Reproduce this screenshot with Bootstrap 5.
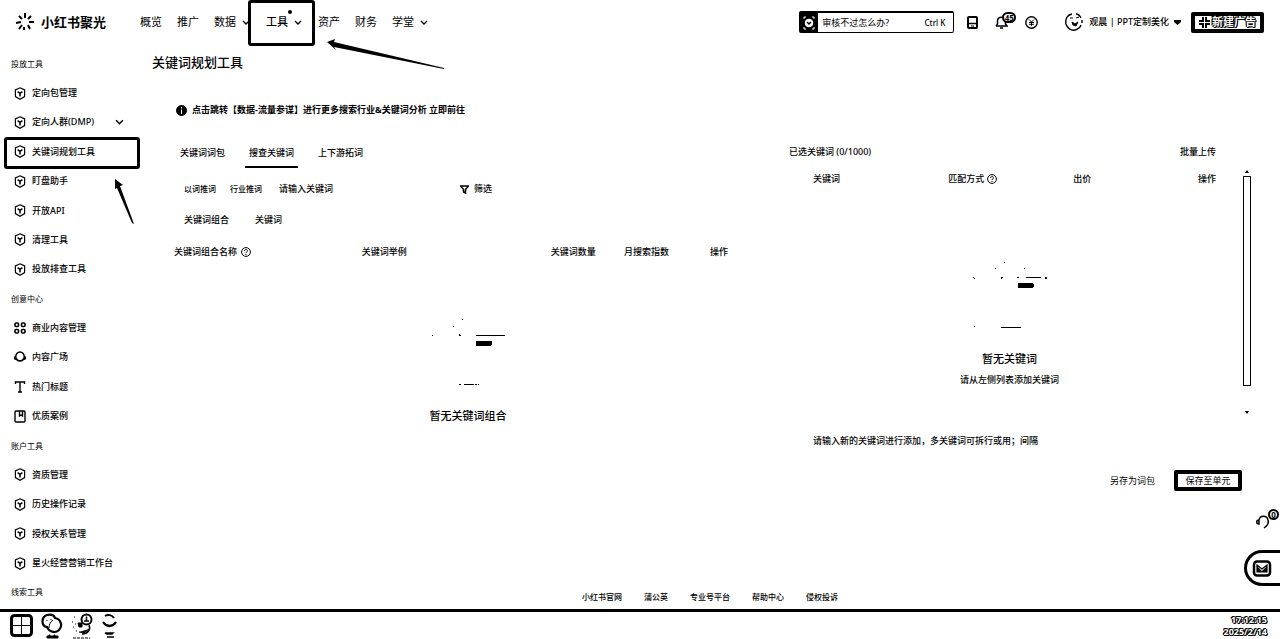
<!DOCTYPE html>
<html lang="zh-CN">
<head>
<meta charset="utf-8">
<meta name="viewport" content="width=device-width, initial-scale=1">
<title>小红书聚光 - 关键词规划工具</title>
<link rel="stylesheet" href="https://cdn.jsdelivr.net/npm/bootstrap@5.3.0/dist/css/bootstrap.min.css">
<style>
body{font-family:"Noto Sans","Noto Sans CJK SC",sans-serif;font-size:9px;line-height:14px;color:#000;background:#fff;font-weight:500}
a{color:#000;text-decoration:none}
button,input,textarea{color:#000;font:inherit}
button{background:none;border:0;padding:0}
svg{display:block;flex:none;fill:none;stroke:#000}
.defs{position:absolute;width:0;height:0}
.fs-s{font-size:8px}
.fs-m{font-size:11px}
.fs-l{font-size:13px}
.topbar{height:44px;padding:0 16px 0 15px}
.brand-name{font-weight:700;margin-left:6px}
.main-nav{gap:15px;margin-left:34px;font-weight:400}
.main-nav .chev{margin-left:5px;width:10px}
.callout{position:absolute;border:3px solid #000;border-radius:3px;pointer-events:none}
.callout-nav{left:-18px;top:-15px;width:67px;height:46px}
.callout-side{inset:0 0 -2px 4px}
.dot{position:absolute;left:22px;top:-5px;width:4px;height:4px;border-radius:50%;background:#000}
.arrow-a{position:absolute;left:326px;top:38px;pointer-events:none}
.arrow-b{position:absolute;left:112px;top:178px;pointer-events:none}
.search{width:155px;height:22px;border:1px solid #000;border-top-width:2px;border-radius:2px}
.search .tile{width:18px;flex:none;background:#000}
.search input{border:0;outline:0;min-width:0;padding:0 0 0 4px;background:none;font-weight:400}
::placeholder{color:#000!important;opacity:1!important}
.num{position:absolute;border:2px solid #000;border-radius:6px;background:#fff;font-size:8px;line-height:7px;font-weight:700;text-align:center}
.outlined{color:#fff;font-weight:700;text-shadow:1px 0 #000,-1px 0 #000,0 1px #000,0 -1px #000,1px 1px #000,-1px -1px #000}
.heavy{border:4px solid #000;border-radius:2px;height:21px}
.side{width:140px;padding:5px 0 2px}
.side>*{flex:1 0 24px;display:flex;align-items:center;position:relative}
.side a{padding-left:14px}
.side a svg{margin-right:6px}
.side .sec{padding-left:11px;font-size:8px;font-weight:400}
.content-area{padding-left:12px;min-width:0}
.cols{display:grid;grid-template-columns:632fr 484fr;margin:14px 12px 0 0}
.title{height:36px;margin:0;font-weight:500;line-height:36px}
.note{height:28px;margin-top:16px;padding-left:24px;gap:5px}
.tabs{gap:16px;margin-left:24px;height:30px}
.tabs a{padding:8px 4px 0;border-bottom:2px solid transparent}
.tabs .on{border-color:#000}
.seek{height:22px;margin-top:10px;padding-left:32px}
.seek input{border:0;outline:0;background:none;padding:0;width:165px}
.sub{height:22px;margin-top:9px;padding-left:32px;gap:26px}
.plain{width:100%;table-layout:fixed}
.plain th{font-weight:500;height:20px;padding:0;white-space:nowrap}
.left-table{margin-top:11px}
.blank{text-align:center}
.blank svg{margin:0 auto;fill:#000;stroke:none}
.blank-left{padding-top:56px}
.blank-right{padding:73px 8px 0 0}
.right-head{height:28px;padding:0 52px 0 5px}
.rail{width:8px;margin:3px 17px 0 0}
.rail .track{flex:1;border:1px solid #000;margin:3px 0 25px}
.panel{height:249px}
.words{border:0;outline:0;resize:none;background:none;height:34px;padding:10px 0;margin:9px 0 0 29px;width:400px;overflow:hidden}
.acts{gap:19px;padding-right:26px;margin-top:12px;font-weight:400}
.foot{height:24px;gap:22px;font-size:8px}
.float-tools{position:absolute;right:0;top:508px;width:36px}
.mail{width:36px;height:36px;border:3px solid #000;border-right:0;border-radius:18px 0 0 18px;padding-left:5px;margin-top:21px}
.taskbar{height:30px;border-top:3px solid #000;padding:0 13px 0 10px}
.clock{line-height:12px;font-size:9px;text-align:right}
</style>
</head>
<body class="d-flex flex-column min-vh-100 position-relative">
<svg class="defs" aria-hidden="true">
  <symbol id="hex" viewBox="0 0 12 13"><path d="M6 .8 10.600 3v6.600L6 12.200 1.400 9.600V3Z" stroke-width="1.200"/><path d="M3.600 4.600 6 6.300l2.400-1.700M6 6.300v3.200" stroke-width="1.500"/></symbol>
  <symbol id="down" viewBox="0 0 8 5"><path d="m1 1 3 3 3-3" stroke-width="1.400"/></symbol>
  <symbol id="ask" viewBox="0 0 10 10"><circle cx="5" cy="5" r="4.400"/><path d="M3.500 4c0-2 3-2 3-.2C6.500 5 5 4.800 5 6.200M5 7v1"/></symbol>
</svg>

<header class="topbar d-flex align-items-center">
  <a href="#" class="d-flex align-items-center">
    <svg width="20" height="18" viewBox="0 0 20 18" stroke-width="2"><path d="M10 0v5M4 3l3 3M16 3l-3 3M1 10l5-1M14 9h5M4 16l3-4M9 17v-3M15 16l-2-4"/></svg>
    <span class="brand-name fs-l">小红书聚光</span>
  </a>
  <nav class="main-nav d-flex align-items-center fs-m">
    <a href="#">概览</a><a href="#">推广</a>
    <a href="#" class="d-flex align-items-center">数据<svg class="chev" width="8" height="5"><use href="#down"/></svg></a>
    <a href="#" class="d-flex align-items-center position-relative fw-medium">工具<svg class="chev" width="8" height="5"><use href="#down"/></svg><i class="dot"></i><i class="callout callout-nav"></i></a>
    <a href="#">资产</a><a href="#">财务</a>
    <a href="#" class="d-flex align-items-center">学堂<svg class="chev" width="8" height="5"><use href="#down"/></svg></a>
  </nav>
  <div class="d-flex align-items-center ms-auto">
    <label class="search d-flex align-items-stretch">
      <span class="tile d-flex align-items-center justify-content-center"><svg width="12" height="14" viewBox="0 0 12 14" style="stroke:#fff"><path d="M1 3V1h2M9 1h2v2M1 11v2h2M9 13h2v-2"/><circle cx="6" cy="7" r="3.800" fill="#fff"/><path d="m4 6 2 2 2-2" stroke="#000" stroke-width="1.500"/></svg></span>
      <input class="flex-grow-1" type="text" placeholder="审核不过怎么办?" aria-label="搜索">
      <span class="fs-s align-self-center text-nowrap pe-2">Ctrl K</span>
    </label>
    <button style="margin-left:13px" aria-label="移动端"><svg width="11" height="13" viewBox="0 0 11 13" stroke-width="2"><rect x="1" y="1" width="9" height="11" rx="1"/><path d="M1 7.500h9" stroke-width="1.500"/><path d="M4 10h3" stroke-width="1"/></svg></button>
    <button class="position-relative" style="margin-left:17px" aria-label="通知"><svg width="13" height="14" viewBox="0 0 13 14" stroke-width="1.500"><path d="M1 11h11l-1.500-2V6c0-5-8-5-8 0v3L1 11M5 13h3"/></svg><span class="num" style="left:7px;top:-3px;width:14px">45</span></button>
    <button style="margin-left:17px" aria-label="余额"><svg width="13" height="13" viewBox="0 0 13 13"><circle cx="6.500" cy="6.500" r="5.700" stroke-width="1.400"/><path d="m4 3.500 2.500 2.500L9 3.500M6.500 6v4M4 6.500h5M4 8.300h5"/></svg></button>
    <a href="#" class="d-flex align-items-center" style="margin-left:27px">
      <svg width="18" height="18" viewBox="0 0 18 18"><path d="M7 1C2 2 0 6 1 11c1 4 5 7 9 6 3-1 5-2 6-5M11 1c2 0 4 2 5 4M17 7v3" stroke-width="1.400"/><path d="M5 5h3M11 5l3-1M7 9l3 2 3-2-2 4-3-1Z" fill="#000"/></svg>
      <span style="margin:0 5px 0 6px">观晨 | PPT定制美化</span>
      <svg width="7" height="5" viewBox="0 0 7 5"><path d="M0 0h7v2L3.500 5 0 2Z" fill="#000" stroke="none"/></svg>
    </a>
    <button class="heavy outlined fs-m d-flex align-items-center justify-content-center" style="width:73px;margin-left:10px;gap:2px"><svg width="11" height="11" viewBox="0 0 11 11" stroke-width="2"><path d="M4 0v4H0M7 0v4h4M4 11V7H0M7 11V7h4"/></svg>新建广告</button>
  </div>
</header>

<div class="d-flex flex-grow-1">
  <nav class="side d-flex flex-column flex-shrink-0">
    <span class="sec">投放工具</span>
    <a href="#"><svg width="12" height="13"><use href="#hex"/></svg>定向包管理</a>
    <a href="#"><svg width="12" height="13"><use href="#hex"/></svg>定向人群(DMP)<svg width="9" height="6" class="ms-auto me-3"><use href="#down"/></svg></a>
    <a href="#"><svg width="12" height="13"><use href="#hex"/></svg>关键词规划工具<i class="callout callout-side"></i></a>
    <a href="#"><svg width="12" height="13"><use href="#hex"/></svg>盯盘助手</a>
    <a href="#"><svg width="12" height="13"><use href="#hex"/></svg>开放API</a>
    <a href="#"><svg width="12" height="13"><use href="#hex"/></svg>清理工具</a>
    <a href="#"><svg width="12" height="13"><use href="#hex"/></svg>投放排查工具</a>
    <span class="sec">创意中心</span>
    <a href="#"><svg width="12" height="12" viewBox="0 0 12 12" stroke-width="1.600"><rect x="1" y="1" width="3.500" height="3.500" rx="1"/><rect x="7.500" y="1" width="3.500" height="3.500" rx="1"/><rect x="1" y="7.500" width="3.500" height="3.500" rx="1"/><rect x="7.500" y="7.500" width="3.500" height="3.500" rx="1"/></svg>商业内容管理</a>
    <a href="#"><svg width="12" height="12" viewBox="0 0 12 12" stroke-width="1.400"><path d="M2 7C1 3 4 1 6 1s5 2 4 6c-1 4-7 4-8 0ZM2 5C0 6 0 8 1 8c3 2 7 2 10 0 1-1 0-3-1-3"/></svg>内容广场</a>
    <a href="#"><svg width="12" height="12" viewBox="0 0 12 12" stroke-width="1.400"><path d="M1.500 3V1h9v2M6 1v10M4 11h4"/></svg>热门标题</a>
    <a href="#"><svg width="12" height="13" viewBox="0 0 12 13" stroke-width="1.400"><rect x="1" y="1" width="10" height="11" rx="1"/><path d="M5.500 1v5L7 5l1.500 1V1"/></svg>优质案例</a>
    <span class="sec">账户工具</span>
    <a href="#"><svg width="12" height="13"><use href="#hex"/></svg>资质管理</a>
    <a href="#"><svg width="12" height="13"><use href="#hex"/></svg>历史操作记录</a>
    <a href="#"><svg width="12" height="13"><use href="#hex"/></svg>授权关系管理</a>
    <a href="#"><svg width="12" height="13"><use href="#hex"/></svg>星火经营营销工作台</a>
    <span class="sec">线索工具</span>
  </nav>

  <main class="content-area d-flex flex-column flex-grow-1">
    <h1 class="title fs-l">关键词规划工具</h1>
    <div class="note d-flex align-items-center">
      <svg width="11" height="11" viewBox="0 0 11 11"><circle cx="5.500" cy="5.500" r="5" fill="#000"/><path d="M5.500 2v1.500M5.500 4.500V9" stroke="#fff"/></svg>
      <span class="fw-bold">点击跳转【数据-流量参谋】进行更多搜索行业&amp;关键词分析 <a href="#">立即前往</a></span>
    </div>
    <div class="cols">
      <section>
        <nav class="tabs d-flex"><a href="#">关键词词包</a><a href="#" class="on">搜查关键词</a><a href="#">上下游拓词</a></nav>
        <div class="seek d-flex align-items-center">
          <button class="fs-s">以词推词</button><button class="fs-s" style="margin:0 17px 0 14px">行业推词</button>
          <input type="text" placeholder="请输入关键词" aria-label="关键词">
          <button class="d-flex align-items-center ms-3" style="gap:5px"><svg width="9" height="9" viewBox="0 0 9 9" stroke-width="1.500"><path d="M.5 1h8L5.500 4.500V8L3.500 7V4.500Z"/></svg>筛选</button>
        </div>
        <div class="sub d-flex align-items-center"><a href="#">关键词组合</a><a href="#">关键词</a></div>
        <table class="plain left-table">
          <colgroup><col style="width:33.200%"><col style="width:29.900%"><col style="width:11.600%"><col style="width:13.600%"><col></colgroup>
          <tr><th><span class="d-flex align-items-center" style="gap:4px;padding-left:22px">关键词组合名称<svg width="10" height="10"><use href="#ask"/></svg></span></th><th>关键词举例</th><th>关键词数量</th><th>月搜索指数</th><th>操作</th></tr>
        </table>
        <div class="blank blank-left">
          <svg width="76" height="68" viewBox="0 0 76 68" shape-rendering="crispEdges"><path d="M32 1h1v1h-1zM23 8h1v1h-1zM2 17h1v1H2zM29 16h1v1h1v1h-2zM46 17h29v1H46zM46 23h16v4h-1v1H46zM29 66h2v1h-2zM34 66h10v1H34zM45 66h2v1h-2zM48 66h1v1h-1z"/></svg>
          <div class="fs-m" style="padding-top:23px">暂无关键词组合</div>
        </div>
      </section>
      <section>
        <div class="right-head d-flex align-items-center justify-content-between"><span>已选关键词 (0/1000)</span><button>批量上传</button></div>
        <div class="panel d-flex">
          <div class="flex-grow-1">
            <table class="plain" style="margin-top:3px">
              <colgroup><col style="width:35.800%"><col style="width:27.200%"><col style="width:27.200%"><col></colgroup>
              <tr><th style="padding-left:29px">关键词</th><th><span class="d-flex align-items-center" style="gap:3px">匹配方式<svg width="10" height="10"><use href="#ask"/></svg></span></th><th>出价</th><th>操作</th></tr>
            </table>
            <div class="blank blank-right">
              <svg width="76" height="68" viewBox="0 0 76 68" shape-rendering="crispEdges"><path d="M32 0h1v1h-1zM23 6h1v1h-1zM52 6h1v1h-1zM1 15h1v1h1v1H2v-1H1zM29 15h2v1h-1v1h-1zM45 15h2v1h-2zM54 15h15v1H54zM73 15h2v2h-2zM46 21h15v1h1v3h-1v1H46zM2 64h1v1H2zM29 65h20v1H29z"/></svg>
              <div class="fs-m" style="padding-top:22px">暂无关键词</div>
              <div style="padding-top:7px">请从左侧列表添加关键词</div>
            </div>
          </div>
          <div class="rail d-flex flex-column">
            <svg width="8" height="4" viewBox="0 0 8 4"><path d="M4 1 6 4H2Z" fill="#000" stroke="none"/></svg>
            <div class="track"></div>
            <svg width="8" height="4" viewBox="0 0 8 4"><path d="M2 0h4L4 3Z" fill="#000" stroke="none"/></svg>
          </div>
        </div>
        <textarea class="words d-block" rows="1" aria-label="新关键词" placeholder="请输入新的关键词进行添加，多关键词可拆行或用；间隔"></textarea>
        <div class="acts d-flex align-items-center justify-content-end"><button>另存为词包</button><button class="heavy d-flex align-items-center justify-content-center" style="width:68px">保存至单元</button></div>
      </section>
    </div>
    <footer class="foot d-flex align-items-center justify-content-center mt-auto" style="margin-left:-12px"><a href="#">小红书官网</a><a href="#">蒲公英</a><a href="#">专业号平台</a><a href="#">帮助中心</a><a href="#">侵权投诉</a></footer>
  </main>
</div>

<div class="taskbar d-flex align-items-center">
  <button aria-label="开始"><svg width="23" height="23" viewBox="0 0 23 23"><rect x="1.500" y="1.500" width="20" height="20" rx="3" stroke-width="3"/><path d="M11.500 3v17M3 11.500h17"/></svg></button>
  <button aria-label="微信" style="margin-left:8px"><svg width="22" height="26" viewBox="0 0 22 26"><path d="M6 14C0 13 0 4 6 2c4-1 7 0 8 3 6 1 8 8 4 12-3 3-9 3-12-3Z" stroke-width="2.200"/><path d="M12 7c-3 2-4 5-4 8M6 7v1M10 6v1"/><path d="M6 25v-2h2v-1h1v1h4v-1h1v1h3v2Z" fill="#000"/></svg></button>
  <button aria-label="浏览器" style="margin-left:8px"><svg width="22" height="26" viewBox="0 0 22 26"><circle cx="15.500" cy="6.500" r="5" stroke-width="2"/><path d="M15.500 3.500v5M13 8h5" stroke-width="1.500"/><path d="M7 10h4v4H8ZM8 19l5 1 5-4" fill="#000"/><path d="M18 12c2 4-1 9-7 9" stroke-width="1.500"/><path d="M3 4h1M1 9h1M4 11h1M2 14h1M5 18h1M2 25h17" stroke-dasharray="3 1"/></svg></button>
  <button aria-label="应用" style="margin-left:9px"><svg width="16" height="26" viewBox="0 0 16 26"><path d="M3 3c3-2 7-1 9 2M1 9c4 5 9 5 13 0-3 5-9 6-13 0Z" stroke-width="2"/><path d="M3 20h8l-1 1H5ZM5 24h7" fill="#000" stroke-width="1.500"/></svg></button>
  <div class="clock outlined ms-auto">17:12:15<br>2025/2/14</div>
</div>

<div class="float-tools">
  <button class="d-block position-relative" aria-label="客服" style="margin-left:12px;padding-top:7px"><svg width="14" height="14" viewBox="0 0 14 14" stroke-width="1.500"><path d="M3 8V5c1-5 8-5 9 0 1 3-1 6-4 8M3 5C0 5 0 9 3 9Z"/></svg><span class="num" style="left:12px;top:1px;width:11px">0</span></button>
  <button class="mail d-flex align-items-center" aria-label="消息"><svg width="20" height="17" viewBox="0 0 20 17"><rect x="2" y="1.500" width="16" height="14" rx="3" stroke-width="2.500"/><path d="M5 5v7h10V5l-5 4Z" stroke-width="1.200"/><path d="M5 12V6l5 5 5-5v6Z" fill="#000" stroke="none"/></svg></button>
</div>
<svg class="arrow-a" width="120" height="34" viewBox="0 0 120 34"><path d="M1 4 9 1 8 4 118 30 118 31 8 9 10 12Z" fill="#000" stroke="none"/></svg>
<svg class="arrow-b" width="24" height="48" viewBox="0 0 24 48"><path d="M3 1 11 7 8 8 22 46 20 45 5 10 3 11Z" fill="#000" stroke="none"/></svg>
<script src="https://cdn.jsdelivr.net/npm/bootstrap@5.3.0/dist/js/bootstrap.bundle.min.js"></script>
</body>
</html>
